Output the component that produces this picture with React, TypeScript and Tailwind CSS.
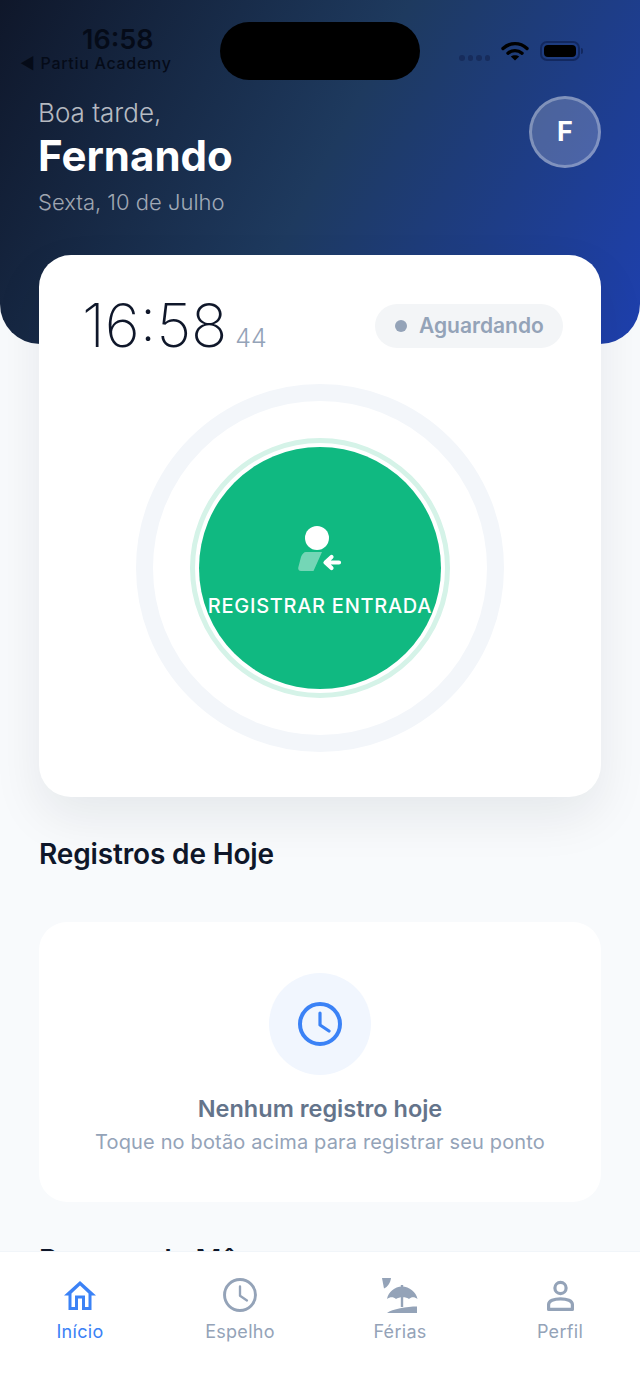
function WifiIcon() {
  return (
    <svg width="28" height="20" viewBox="0 0 28 20" fill="none">
      <path d="M2 7.500C9 1 19 1 26 7.500" stroke="#000" strokeWidth="3.400" strokeLinecap="round" />
      <path d="M7 12.200C11 8.800 17 8.800 21 12.200" stroke="#000" strokeWidth="3.400" strokeLinecap="round" />
      <path d="M14 19.500 9.800 15.600C12 13.800 16 13.800 18.200 15.600Z" fill="#000" />
    </svg>
  );
}

function EntryIcon() {
  return (
    <svg width="44" height="46" viewBox="0 0 44 46" fill="none">
      <circle cx="19" cy="12" r="12" fill="#fff" />
      <path d="M8 26H24L15.500 45H3C.5 45-.2 43 .4 41L3 31C4 28 6 26 8 26Z" fill="#fff" fillOpacity=".42" />
      <path d="M41 36.500H29M33.500 31 27.500 36.500 33.500 42" stroke="#fff" strokeWidth="4.200" strokeLinecap="round" strokeLinejoin="round" />
    </svg>
  );
}

function ClockIcon({ color, size, width }: { color: string; size: number; width: number }) {
  return (
    <svg width={size} height={size} viewBox="0 0 44 44" fill="none">
      <circle cx="22" cy="22" r="20" stroke={color} strokeWidth={width} />
      <path d="M22 11V23L31 29" stroke={color} strokeWidth={width * 0.8} strokeLinecap="round" strokeLinejoin="round" />
    </svg>
  );
}

function HomeIcon() {
  return (
    <svg width="32" height="29" viewBox="0 0 32 29" fill="none">
      <path d="M16 0 32 14.500H27.500V29H18V17.500H14V29H4.500V14.500H0Z" fill="#3b82f6" />
      <path d="M16 4.500 7.500 12.500V26H11V14.500H21V26H24.500V12.500Z" fill="#fff" />
    </svg>
  );
}

function BeachIcon() {
  return (
    <svg width="36" height="35" viewBox="0 0 36 35" fill="none">
      <path d="M0 0H9C8.500 5 5.500 9 2 10.500Z" fill="#94a3b8" />
      <path d="M5 21C6.500 13.500 12.500 9 20 8.500 27.500 9 34 13.500 35.500 21 32.500 18.500 29.500 18.500 27 21 24.500 18.500 17 18.500 14 21 11.500 18.500 8 18.500 5 21Z" fill="#94a3b8" />
      <path d="M20 7V29" stroke="#94a3b8" strokeWidth="2.400" />
      <path d="M5 35C10 31 25 28.500 35 28.500V35Z" fill="#94a3b8" />
    </svg>
  );
}

function PersonIcon() {
  return (
    <svg width="27" height="31" viewBox="0 0 27 31" fill="none">
      <circle cx="13.500" cy="8" r="5.600" stroke="#94a3b8" strokeWidth="3.200" />
      <path d="M1.600 29.400V24.500C1.600 20.800 7 18.800 13.500 18.800 20 18.800 25.400 20.800 25.400 24.500V29.400Z" stroke="#94a3b8" strokeWidth="3.200" strokeLinejoin="round" />
    </svg>
  );
}

const tabs = [
  { label: "Início", icon: <HomeIcon />, active: true },
  { label: "Espelho", icon: <ClockIcon color="#94a3b8" size={34} width={3.8} />, active: false },
  { label: "Férias", icon: <BeachIcon />, active: false },
  { label: "Perfil", icon: <PersonIcon />, active: false },
];

export default function App() {
  return (
    <div className="flex h-[1391px] flex-col overflow-hidden bg-white font-['Inter',sans-serif]">
      <main className="h-[1251px] overflow-hidden bg-[#f8fafc]">
        <header className="h-[344px] rounded-b-[40px] bg-[linear-gradient(118deg,#0f172a_0%,#1e3a5f_50%,#1e40af_100%)] px-[39px]">
          <div className="flex h-[96px]">
            <div className="-ml-[19px] w-[200px] pt-[26px] text-[#050b18]">
              <p className="pl-[62px] text-[27px] leading-[28px] font-semibold">16:58</p>
              <p className="-mt-[1px] text-[16px] leading-[20px] font-medium tracking-[0.7px]">◀ Partiu Academy</p>
            </div>
            <div className="mt-[22px] h-[58px] w-[200px] rounded-full bg-black" />
            <div className="flex h-[80px] flex-1 items-start pt-[41px] pl-[39px]">
              <div className="mt-[14px] flex gap-[3px]">
                <span className="size-[5.500px] rounded-full bg-[#172c5c]" />
                <span className="size-[5.500px] rounded-full bg-[#172c5c]" />
                <span className="size-[5.500px] rounded-full bg-[#172c5c]" />
                <span className="size-[5.500px] rounded-full bg-[#172c5c]" />
              </div>
              <div className="ml-[11px]">
                <WifiIcon />
              </div>
              <div className="ml-[11px] flex items-center">
                <div className="h-[20px] w-[40px] rounded-[7px] border-2 border-[#12285f] p-[2px]">
                  <div className="h-full rounded-[4px] bg-black" />
                </div>
                <div className="ml-[1px] h-[6px] w-[2px] rounded-r bg-[#12285f]" />
              </div>
            </div>
          </div>
          <div className="flex items-start justify-between">
            <div className="-ml-[1px]">
              <p className="text-[26px] leading-[34px] font-light text-white/70">Boa tarde,</p>
              <p className="text-[42px] leading-[52px] font-bold text-white">Fernando</p>
              <p className="mt-[6px] text-[22px] leading-[28px] font-light text-white/60">Sexta, 10 de Julho</p>
            </div>
            <div className="flex size-[72px] items-center justify-center rounded-full border-[3px] border-white/30 bg-white/20 text-[27px] font-bold text-white">
              F
            </div>
          </div>
        </header>

        <section className="relative mx-[39px] -mt-[89px] flex h-[542px] flex-col rounded-[32px] bg-white px-[43px] pt-[49px] shadow-[0_20px_50px_rgba(15,23,42,0.08)]">
          <div className="flex h-[44px] items-center justify-between">
            <p className="flex items-baseline text-[#0f172a]">
              <span className="text-[60px] leading-[46px] font-extralight">16:58</span>
              <span className="ml-[8px] text-[25px] leading-[26px] font-light text-[#94a3b8]">44</span>
            </p>
            <div className="-mr-[5px] flex h-[44px] w-[188px] items-center gap-[12px] rounded-full bg-[#f3f5f7] pl-[20px]">
              <span className="size-[12px] rounded-full bg-[#94a3b8]" />
              <span className="text-[21px] font-semibold text-[#94a3b8]">Aguardando</span>
            </div>
          </div>
          <div className="mx-auto mt-[36px] flex size-[368px] items-center justify-center rounded-full border-[17px] border-[#f3f6fa]">
            <div className="flex size-[260px] items-center justify-center rounded-full border-[5px] border-[#d5f3e8]">
              <button className="flex size-[242px] shrink-0 flex-col items-center rounded-full bg-[#10b981] pt-[79px] text-white">
                <EntryIcon />
                <span className="mt-[22px] text-[20px] leading-[24px] font-medium tracking-[0.72px] whitespace-nowrap">REGISTRAR ENTRADA</span>
              </button>
            </div>
          </div>
        </section>

        <h2 className="mx-[39px] mt-[39px] text-[28px] leading-[36px] font-semibold tracking-[-0.15px] text-[#0f172a]">Registros de Hoje</h2>

        <section className="mx-[39px] mt-[50px] flex h-[280px] flex-col items-center rounded-[28px] bg-white pt-[51px]">
          <div className="flex size-[102px] items-center justify-center rounded-full bg-[#f1f6fe]">
            <ClockIcon color="#3b82f6" size={44} width={4} />
          </div>
          <p className="mt-[18px] text-[23.500px] leading-[32px] font-semibold text-[#64748b]">Nenhum registro hoje</p>
          <p className="mt-[2px] text-[20px] leading-[30px] tracking-[0.16px] text-[#94a3b8]">Toque no botão acima para registrar seu ponto</p>
        </section>

        <h2 className="mx-[39px] mt-[40px] text-[28px] leading-[36px] font-semibold tracking-[-0.15px] text-[#0f172a]">Resumo do Mês</h2>
      </main>

      <nav className="grid flex-1 grid-cols-4 content-start border-t border-[#f1f5f9] bg-white pt-[25px]">
        {tabs.map((tab) => (
          <div key={tab.label} className="flex flex-col items-center">
            <div className="flex h-[36px] items-center">{tab.icon}</div>
            <span className={`mt-[6px] text-[18px] leading-[26px] tracking-[0.3px] ${tab.active ? "text-[#3b82f6]" : "text-[#94a3b8]"}`}>
              {tab.label}
            </span>
          </div>
        ))}
      </nav>
    </div>
  );
}
